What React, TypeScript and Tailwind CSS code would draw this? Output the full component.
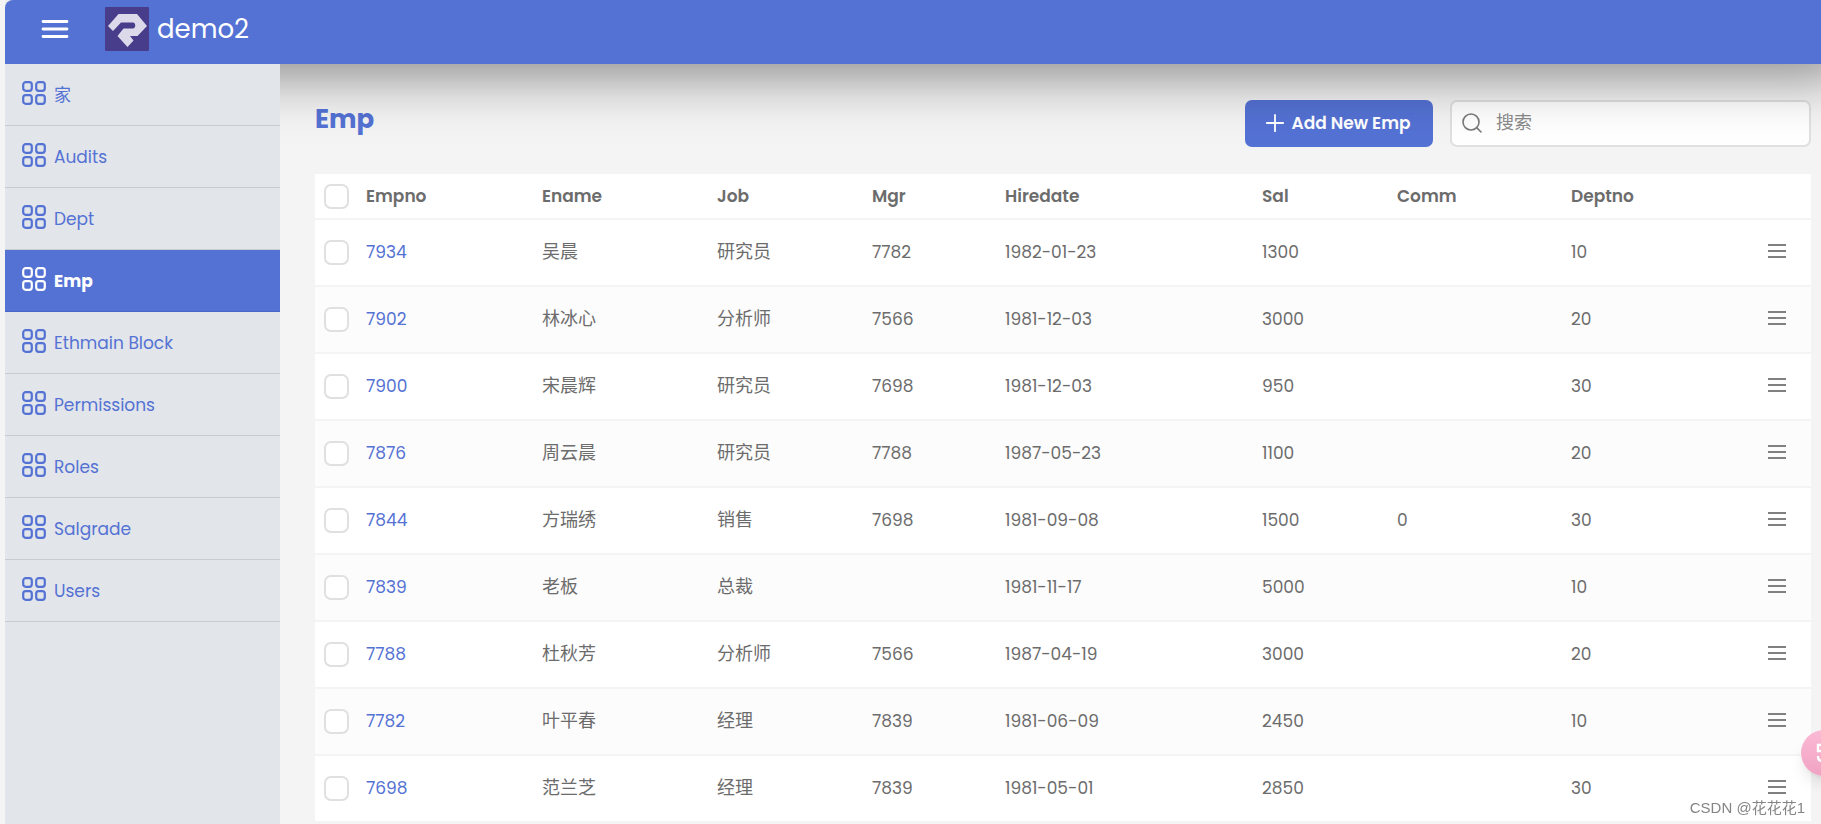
import { Plus, Search } from 'lucide-react';

interface NavItem {
    label: string;
    active?: boolean;
}

interface Employee {
    empno: number;
    ename: string;
    job: string;
    mgr: string;
    hiredate: string;
    sal: number;
    comm: string;
    deptno: number;
}

const navItems: NavItem[] = [
    { label: '家' },
    { label: 'Audits' },
    { label: 'Dept' },
    { label: 'Emp', active: true },
    { label: 'Ethmain Block' },
    { label: 'Permissions' },
    { label: 'Roles' },
    { label: 'Salgrade' },
    { label: 'Users' },
];

const employees: Employee[] = [
    { empno: 7934, ename: '吴晨', job: '研究员', mgr: '7782', hiredate: '1982-01-23', sal: 1300, comm: '', deptno: 10 },
    { empno: 7902, ename: '林冰心', job: '分析师', mgr: '7566', hiredate: '1981-12-03', sal: 3000, comm: '', deptno: 20 },
    { empno: 7900, ename: '宋晨辉', job: '研究员', mgr: '7698', hiredate: '1981-12-03', sal: 950, comm: '', deptno: 30 },
    { empno: 7876, ename: '周云晨', job: '研究员', mgr: '7788', hiredate: '1987-05-23', sal: 1100, comm: '', deptno: 20 },
    { empno: 7844, ename: '方瑞绣', job: '销售', mgr: '7698', hiredate: '1981-09-08', sal: 1500, comm: '0', deptno: 30 },
    { empno: 7839, ename: '老板', job: '总裁', mgr: '', hiredate: '1981-11-17', sal: 5000, comm: '', deptno: 10 },
    { empno: 7788, ename: '杜秋芳', job: '分析师', mgr: '7566', hiredate: '1987-04-19', sal: 3000, comm: '', deptno: 20 },
    { empno: 7782, ename: '叶平春', job: '经理', mgr: '7839', hiredate: '1981-06-09', sal: 2450, comm: '', deptno: 10 },
    { empno: 7698, ename: '范兰芝', job: '经理', mgr: '7839', hiredate: '1981-05-01', sal: 2850, comm: '', deptno: 30 },
];

export default function App() {
    return (
        <div className="h-screen bg-[#f4f4f4] pl-[5px] font-[Poppins,Inter,'Noto_Sans_CJK_SC',sans-serif] text-[17px] leading-6 text-[#6c6c6c]">
            <div className="flex h-full flex-col overflow-hidden">
                <TopBar />
                <div className="flex flex-1 min-h-0">
                    <Sidebar />
                    <main className="flex-1 min-w-0 pl-[35px] pr-2.5 pt-9">
                        <Toolbar />
                        <EmployeeTable />
                    </main>
                </div>
            </div>
            <FloatingWidgets />
        </div>
    );
}

function TopBar() {
    return (
        <header className="relative z-10 h-16 shrink-0 flex items-center bg-[#5472d4] rounded-tl-lg pl-9 pb-1.5 text-white shadow-[32px_8px_60px_rgba(0,0,0,0.5)]">
            <button type="button" aria-label="Toggle menu" className="cursor-pointer">
                <svg width="28" height="20" viewBox="0 0 28 20" fill="none" stroke="currentColor" strokeWidth="2.8" strokeLinecap="round">
                    <path d="M2 2.5h24M2 10h24M2 17.5h24" />
                </svg>
            </button>
            <a href="#home" className="ml-9 flex items-center gap-2 text-[26px] leading-9">
                <Logo />
                demo2
            </a>
        </header>
    );
}

function Logo() {
    return (
        <svg width="44" height="44" viewBox="0 0 44 44" aria-hidden="true">
            <rect width="44" height="44" rx="1" fill="#483d8b" />
            <path
                d="M13.500 7H32l10 12-9.500 10H25l3.500 4.500L22.500 40 12.500 29l6-7.500H28c3 0 3-6 0-6H16L8 24l-5-5z"
                fill="#dcdaea"
            />
        </svg>
    );
}

function GridIcon() {
    return (
        <svg width="24" height="24" viewBox="0 0 24 24" fill="none" stroke="currentColor" strokeWidth="2.2" aria-hidden="true">
            <rect x="1.200" y="1.200" width="8.600" height="8.600" rx="2.500" />
            <rect x="14.200" y="1.200" width="8.600" height="8.600" rx="2.500" />
            <rect x="1.200" y="14.200" width="8.600" height="8.600" rx="2.500" />
            <rect x="14.200" y="14.200" width="8.600" height="8.600" rx="2.500" />
        </svg>
    );
}

function Sidebar() {
    return (
        <nav className="relative z-20 w-[275px] shrink-0 bg-[#e2e5ea]">
            {navItems.map(item => (
                <a
                    key={item.label}
                    href={`#${item.label}`}
                    className={
                        item.active
                            ? 'flex h-[62px] items-start gap-2 border-b border-[#4a66c4] bg-[#5472d4] pl-[17px] pt-[17px] font-bold text-white'
                            : 'flex h-[62px] items-start gap-2 border-b border-[#c8ccd2] pl-[17px] pt-[17px] text-[#5472d4]'
                    }
                >
                    <GridIcon />
                    <span className="pt-0.5">{item.label}</span>
                </a>
            ))}
        </nav>
    );
}

function Toolbar() {
    return (
        <div className="flex items-start justify-between">
            <h1 className="pt-px text-[26px] leading-9 font-bold text-[#5472d4]">Emp</h1>
            <div className="flex gap-[17px]">
                <button type="button" className="flex h-[47px] w-[188px] items-center justify-center gap-0.5 rounded-[7px] bg-[#5472d4] pr-1.5 pb-0.5 font-semibold text-white cursor-pointer">
                    <Plus className="h-7 w-7" strokeWidth={1.6} />
                    Add New Emp
                </button>
                <label className="flex h-[47px] w-[361px] items-center gap-3 rounded-[7px] border-2 border-[#e0e0e0] bg-white px-2 pb-0.5">
                    <Search className="h-6 w-6 text-[#7a7a7a]" strokeWidth={1.6} />
                    <input
                        type="text"
                        aria-label="搜索"
                        placeholder="搜索"
                        className="min-w-0 flex-1 text-lg placeholder-[#8a8a8a] outline-none"
                    />
                </label>
            </div>
        </div>
    );
}

function RowCheckbox({ label }: { label: string }) {
    return (
        <input
            type="checkbox"
            aria-label={label}
            className="block h-[25px] w-[25px] appearance-none rounded-[7px] border-2 border-[#e0e0e0] bg-white checked:bg-[#5472d4]"
        />
    );
}

function EmployeeTable() {
    return (
        <table className="mt-[27px] w-full table-fixed bg-white text-left">
            <thead>
                <tr className="h-[45px] border-b-2 border-[#f4f4f4]">
                    <th className="w-[43px] pl-[9px]"><RowCheckbox label="Select all" /></th>
                    <th className="w-[176px] px-2 font-semibold">Empno</th>
                    <th className="w-[175px] px-2 font-semibold">Ename</th>
                    <th className="w-[155px] px-2 font-semibold">Job</th>
                    <th className="w-[133px] px-2 font-semibold">Mgr</th>
                    <th className="w-[257px] px-2 font-semibold">Hiredate</th>
                    <th className="w-[135px] px-2 font-semibold">Sal</th>
                    <th className="w-[174px] px-2 font-semibold">Comm</th>
                    <th className="w-[188px] px-2 font-semibold">Deptno</th>
                    <th className="w-[60px]" />
                </tr>
            </thead>
            <tbody>
                {employees.map(emp => (
                    <tr key={emp.empno} className="h-[67px] border-b-2 border-[#f4f4f4] even:bg-[#fcfcfc]">
                        <td className="pl-[9px]"><RowCheckbox label={`Select ${emp.empno}`} /></td>
                        <td className="px-2 pb-0.5"><a href={`#${emp.empno}`} className="text-[#5472d4]">{emp.empno}</a></td>
                        <td className="px-2 pb-0.5 text-lg">{emp.ename}</td>
                        <td className="px-2 pb-0.5 text-lg">{emp.job}</td>
                        <td className="px-2 pb-0.5">{emp.mgr}</td>
                        <td className="px-2 pb-0.5">{emp.hiredate}</td>
                        <td className="px-2 pb-0.5">{emp.sal}</td>
                        <td className="px-2 pb-0.5">{emp.comm}</td>
                        <td className="px-2 pb-0.5">{emp.deptno}</td>
                        <td className="pl-4 pb-1">
                            <button type="button" aria-label="Row menu" className="block cursor-pointer text-[#808080]">
                                <svg width="20" height="14" viewBox="0 0 20 14" fill="none" stroke="currentColor" strokeWidth="2">
                                    <path d="M1 1h18M1 7h18M1 13h18" />
                                </svg>
                            </button>
                        </td>
                    </tr>
                ))}
            </tbody>
        </table>
    );
}

function FloatingWidgets() {
    return (
        <>
            <div className="fixed right-[-26px] bottom-12 z-30 h-[46px] w-[46px] rounded-full bg-gradient-to-b from-[#fbb9d4] to-[#f0a3c4] shadow-lg">
                <svg width="46" height="46" viewBox="0 0 46 46" fill="none" stroke="white" strokeWidth="2.4" aria-hidden="true">
                    <path d="M24 15h-7v6h7M17 26c0 3 1 5 4 5" />
                </svg>
            </div>
            <p className="fixed right-4 bottom-1 z-30 font-['Liberation_Sans','Noto_Sans_CJK_SC',sans-serif] text-[15px] leading-6 text-[#858585] [text-shadow:1px_1px_0_white]">
                CSDN @花花花1
            </p>
        </>
    );
}
